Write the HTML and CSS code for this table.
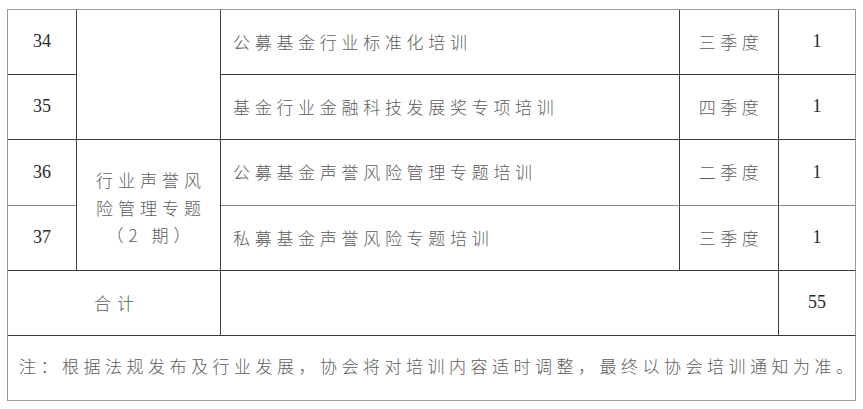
FILE: index.html
```html
<!DOCTYPE html>
<html lang="zh-CN">
<head>
<meta charset="utf-8">
<title>培训计划</title>
<link rel="stylesheet" href="styles.css">
</head>
<body>
<table class="plan">
  <tr>
    <td class="num c1">34</td>
    <td class="cat c2" rowspan="2"></td>
    <td class="title c3">公募基金行业标准化培训</td>
    <td class="qtr c4">三季度</td>
    <td class="num cnt c5 edge-r">1</td>
  </tr>
  <tr>
    <td class="num">35</td>
    <td class="title">基金行业金融科技发展奖专项培训</td>
    <td class="qtr">四季度</td>
    <td class="num cnt edge-r">1</td>
  </tr>
  <tr class="tall">
    <td class="num soft-b">36</td>
    <td class="cat" rowspan="2">行业声誉风<br>险管理专题<br>（2 期）</td>
    <td class="title soft-b">公募基金声誉风险管理专题培训</td>
    <td class="qtr soft-b">二季度</td>
    <td class="num cnt soft-b edge-r">1</td>
  </tr>
  <tr>
    <td class="num">37</td>
    <td class="title">私募基金声誉风险专题培训</td>
    <td class="qtr">三季度</td>
    <td class="num cnt edge-r">1</td>
  </tr>
  <tr>
    <td class="total" colspan="2">合计</td>
    <td colspan="2"></td>
    <td class="num cnt edge-r">55</td>
  </tr>
  <tr>
    <td class="note edge-r edge-b" colspan="5">注：根据法规发布及行业发展，协会将对培训内容适时调整，最终以协会培训通知为准。</td>
  </tr>
</table>
</body>
</html>
```
FILE: styles.css
```css
html, body {
  margin: 0;
  padding: 0;
  background: #ffffff;
}

body {
  padding: 9px 0 0 7px;
  font-family: "Noto Sans CJK SC", "Noto Sans", sans-serif;
  font-size: 17px;
  color: #5c5c5c;
}

.plan {
  border-collapse: separate;
  border-spacing: 0;
  table-layout: fixed;
  width: 849px;
  border-top: 1px solid #9a9a9a;
  border-left: 1px solid #9a9a9a;
}

.plan td {
  box-sizing: border-box;
  height: 65px;
  padding: 0;
  border-right: 1px solid #3c3c3c;
  border-bottom: 1px solid #3c3c3c;
  vertical-align: middle;
  font-weight: 300;
  line-height: 1.2;
}

.plan .tall td {
  height: 66px;
}

.c1 { width: 69px; }
.c2 { width: 144px; }
.c3 { width: 459px; }
.c4 { width: 99px; }
.c5 { width: 77px; }

.plan td.soft-b {
  border-bottom-color: #8a8a8a;
}

.plan td.edge-r {
  border-right: 1px solid #9a9a9a;
}

.plan td.edge-b {
  border-bottom: 1px solid #9a9a9a;
}

.num {
  text-align: center;
  font-family: "Liberation Serif", "Times New Roman", serif;
  font-size: 18px;
  color: #2a2a2a;
}

.plan td.num {
  font-weight: 400;
}

.cnt {
  padding-left: 1px;
}

.cat {
  text-align: center;
  letter-spacing: 5px;
  padding-left: 5px !important;
  line-height: 27.5px !important;
  padding-top: 5px !important;
}

.title {
  padding-left: 12px !important;
  letter-spacing: 4.7px;
  white-space: nowrap;
}

.qtr {
  text-align: center;
  letter-spacing: 4.5px;
  padding-left: 4px !important;
}

.total {
  text-align: center;
  letter-spacing: 6px;
  padding-left: 6px !important;
}

.note {
  padding-left: 11px !important;
  padding-bottom: 3px !important;
  letter-spacing: 4.5px;
  white-space: nowrap;
}
```
